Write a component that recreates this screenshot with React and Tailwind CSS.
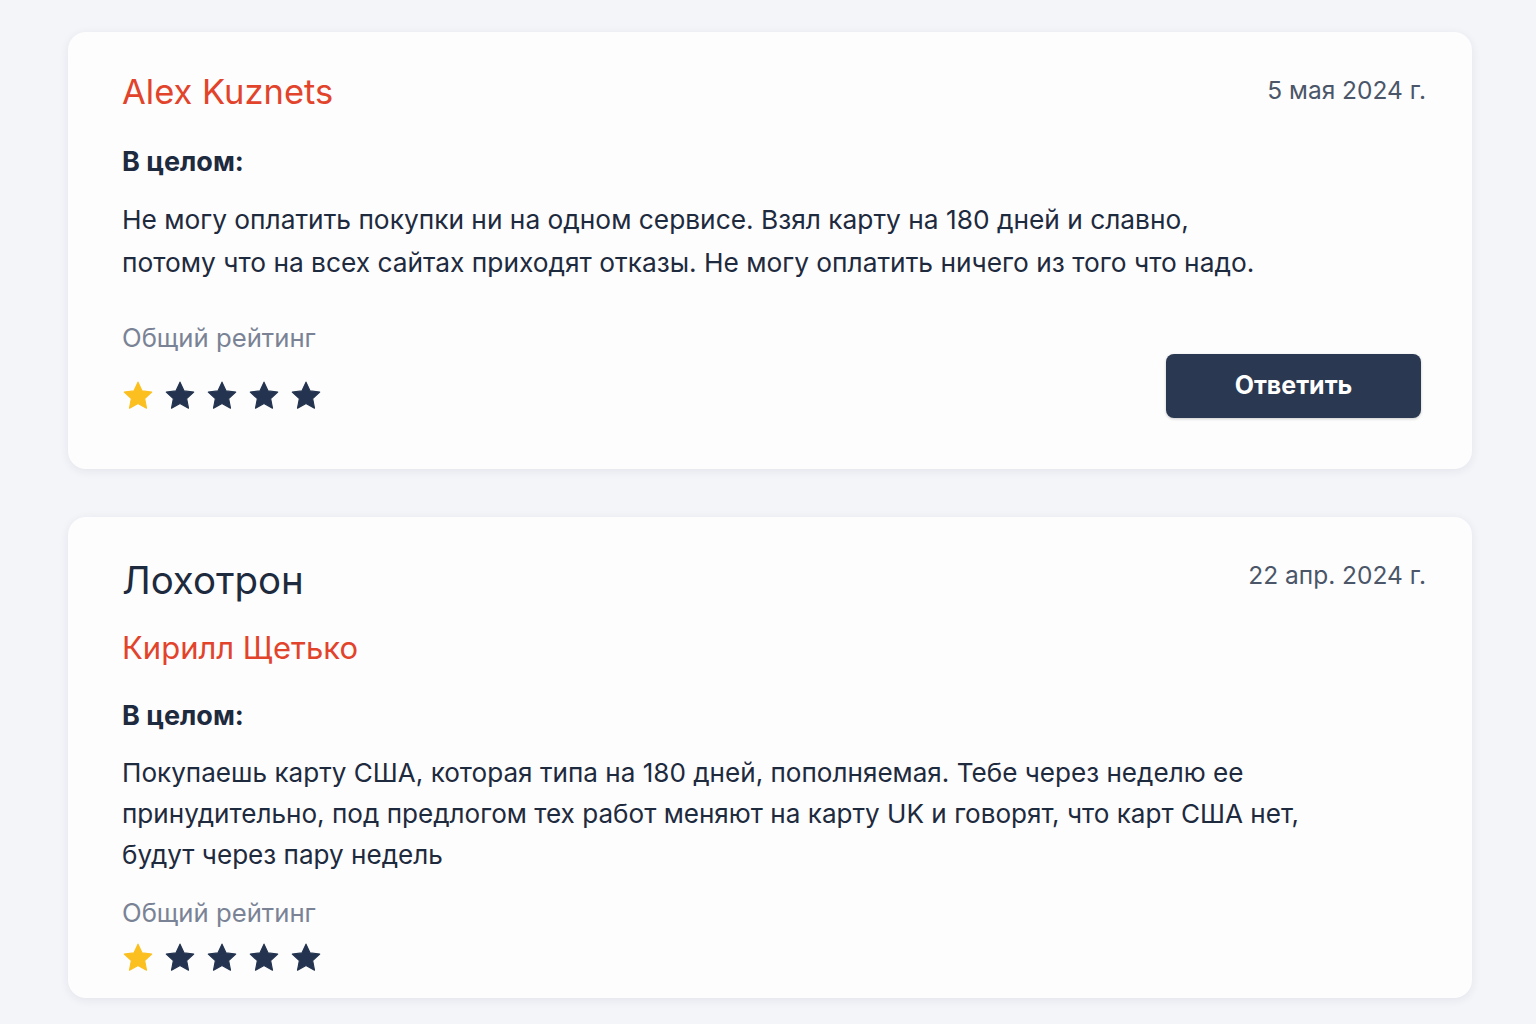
import React from "react";

const Star = ({ color }) => (
  <svg width="34" height="34" viewBox="0 0 24 24" className="shrink-0">
    <path
      d="M12 2.2l2.9 6.2 6.8.8-5 4.7 1.3 6.7L12 17.3l-6 3.3 1.3-6.7-5-4.7 6.8-.8z"
      fill={color}
      stroke={color}
      strokeWidth="0.8"
      strokeLinejoin="round"
    />
  </svg>
);

const Stars = () => (
  <div className="flex items-center gap-[8px] -ml-[1px]">
    <Star color="#fbbf1f" />
    <Star color="#243450" />
    <Star color="#243450" />
    <Star color="#243450" />
    <Star color="#243450" />
  </div>
);

export default function App() {
  return (
    <div
      className="min-h-[1024px] bg-[#f4f5f9] pl-[68px] pr-[64px] pt-[32px] pb-[26px] flex flex-col gap-[48px]"
      style={{ fontFamily: "Inter, 'Noto Sans', sans-serif" }}
    >
      <div className="bg-[#fdfdfd] rounded-[18px] shadow-[0_2px_10px_rgba(30,40,70,0.08)] pl-[54px] pr-[46px] pt-[38px] pb-[48px] h-[437px]">
        <div className="flex justify-between items-start">
          <div className="text-[34.5px] leading-[44px] text-[#e2432b]">Alex Kuznets</div>
          <div className="text-[24.5px] leading-[36px] text-[#4b5669] mt-[2px]">5 мая 2024 г.</div>
        </div>
        <div className="mt-[30px] text-[27px] leading-[36px] font-bold text-[#1e2a3d]">В целом:</div>
        <div className="mt-[18px] text-[26.3px] leading-[43px] text-[#1e2a3d]">
          Не могу оплатить покупки ни на одном сервисе. Взял карту на 180 дней и славно,
          <br />
          потому что на всех сайтах приходят отказы. Не могу оплатить ничего из того что надо.
        </div>
        <div className="flex justify-between items-end mt-[36px]">
          <div>
            <div className="text-[25.7px] leading-[36px] text-[#7a8395]">Общий рейтинг</div>
            <div className="mt-[23px]">
              <Stars />
            </div>
          </div>
          <button className="w-[255px] h-[64px] rounded-[8px] bg-[#2a3951] text-white text-[25px] font-bold mr-[5px] mb-[-5px] shadow-[0_1px_3px_rgba(0,0,0,0.2)]">
            Ответить
          </button>
        </div>
      </div>

      <div className="bg-[#fdfdfd] rounded-[18px] shadow-[0_2px_10px_rgba(30,40,70,0.08)] pl-[54px] pr-[46px] pt-[36px] pb-[24px] h-[481px]">
        <div className="flex justify-between items-start">
          <div className="text-[38.4px] leading-[54px] text-[#1e2a3d]">Лохотрон</div>
          <div className="text-[24.5px] leading-[36px] text-[#4b5669] mt-[4px]">22 апр. 2024 г.</div>
        </div>
        <div className="mt-[19px] text-[31px] leading-[44px] text-[#e2432b]">Кирилл Щетько</div>
        <div className="mt-[28px] text-[27px] leading-[36px] font-bold text-[#1e2a3d]">В целом:</div>
        <div className="mt-[18px] text-[26.1px] leading-[41px] text-[#1e2a3d]">
          Покупаешь карту США, которая типа на 180 дней, пополняемая. Тебе через неделю ее
          <br />
          принудительно, под предлогом тех работ меняют на карту UK и говорят, что карт США нет,
          <br />
          будут через пару недель
        </div>
        <div className="mt-[20px] text-[25.7px] leading-[36px] text-[#7a8395]">Общий рейтинг</div>
        <div className="mt-[10px]">
          <Stars />
        </div>
      </div>
    </div>
  );
}
